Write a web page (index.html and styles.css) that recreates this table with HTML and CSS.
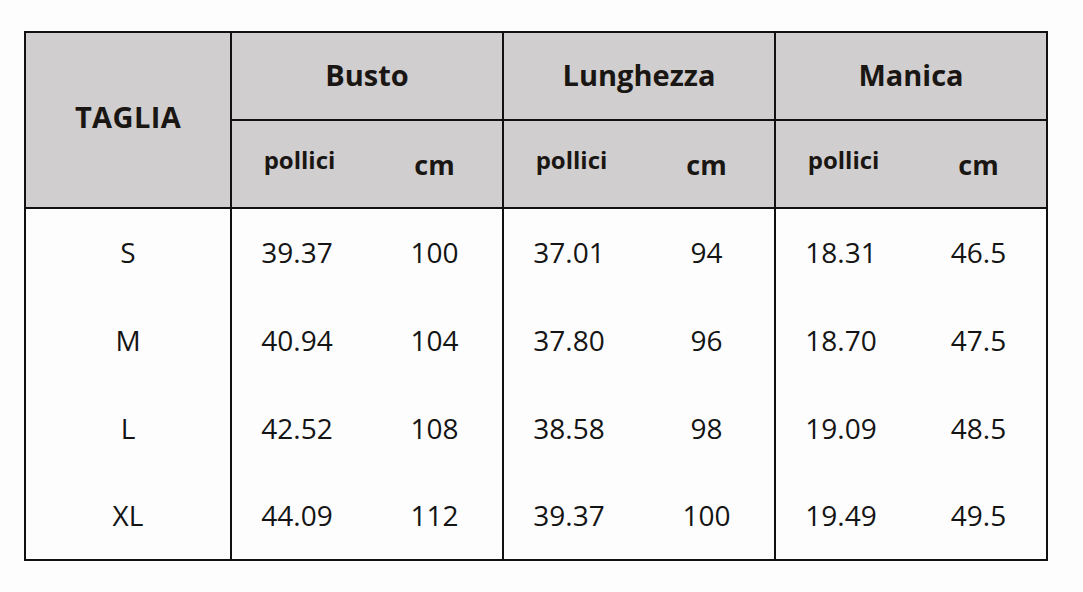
FILE: index.html
```html
<!DOCTYPE html>
<html lang="it">
<head>
<meta charset="utf-8">
<link rel="stylesheet" href="styles.css">
</head>
<body>
<div class="wrap">
<table class="size-table">
  <colgroup>
    <col class="c-first">
    <col class="c-sub"><col class="c-sub">
    <col class="c-sub"><col class="c-sub">
    <col class="c-sub"><col class="c-sub">
  </colgroup>
  <thead>
    <tr>
      <th rowspan="2" class="h-taglia">TAGLIA</th>
      <th colspan="2" class="h-group">Busto</th>
      <th colspan="2" class="h-group">Lunghezza</th>
      <th colspan="2" class="h-group">Manica</th>
    </tr>
    <tr>
      <th class="h-in">pollici</th><th class="h-cm">cm</th>
      <th class="h-in">pollici</th><th class="h-cm">cm</th>
      <th class="h-in">pollici</th><th class="h-cm">cm</th>
    </tr>
  </thead>
  <tbody>
    <tr><td class="size">S</td><td class="in">39.37</td><td class="cm">100</td><td class="in">37.01</td><td class="cm">94</td><td class="in">18.31</td><td class="cm">46.5</td></tr>
    <tr><td class="size">M</td><td class="in">40.94</td><td class="cm">104</td><td class="in">37.80</td><td class="cm">96</td><td class="in">18.70</td><td class="cm">47.5</td></tr>
    <tr><td class="size">L</td><td class="in">42.52</td><td class="cm">108</td><td class="in">38.58</td><td class="cm">98</td><td class="in">19.09</td><td class="cm">48.5</td></tr>
    <tr><td class="size">XL</td><td class="in">44.09</td><td class="cm">112</td><td class="in">39.37</td><td class="cm">100</td><td class="in">19.49</td><td class="cm">49.5</td></tr>
  </tbody>
</table>
</div>
</body>
</html>
```
FILE: styles.css
```css
html, body {
  margin: 0;
  padding: 0;
  background: #fdfdfd;
}
.wrap {
  padding: 31px 0 0 24px;
}
.size-table {
  border-collapse: collapse;
  table-layout: fixed;
  width: 1023px;
  font-family: "Open Sans", "Liberation Sans", sans-serif;
  color: #141414;
}
.c-first { width: 206px; }
.c-sub { width: 136px; }
.size-table th,
.size-table td {
  padding: 0;
  text-align: center;
  vertical-align: middle;
}
.size-table thead th {
  background: #d0cecf;
  border: 2px solid #111;
  color: #1a1613;
  font-weight: 700;
  height: 86px;
  line-height: 1.2;
}
.size-table thead tr:nth-child(2) th {
  border-left: none;
  border-right: none;
}
.size-table thead tr:nth-child(2) th.h-in { border-left: 2px solid #111; }
.size-table thead tr:nth-child(2) th.h-cm { border-right: 2px solid #111; }
.size-table thead tr:first-child th.h-group { padding-bottom: 2px; height: 84px; }
.size-table thead th.h-taglia { font-size: 29px; letter-spacing: 0.4px; padding-bottom: 6px; }
.h-group { font-size: 29px; }
.size-table thead th.h-in { font-size: 24px; padding-bottom: 8px; height: 78px; }
.size-table thead th.h-cm { font-size: 27px; padding-top: 2px; height: 84px; }
.size-table tbody td {
  height: 85px;
  padding-bottom: 3px;
  font-size: 28px;
  font-weight: 400;
  border-top: none;
  border-bottom: none;
}
.size-table tbody tr:last-child td { height: 83px; border-bottom: 2px solid #111; }
.size-table tbody td.size { border-left: 2px solid #111; border-right: 2px solid #111; }
.size-table tbody td.cm { border-right: 2px solid #111; }
.size-table tbody td.in { text-indent: -5px; }
```
